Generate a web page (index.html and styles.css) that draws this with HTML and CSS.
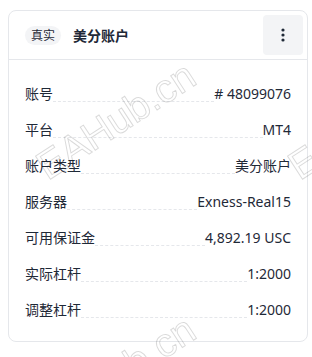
FILE: index.html
```html
<!DOCTYPE html>
<html lang="zh-CN">
<head>
    <meta charset="UTF-8">
    <meta name="viewport" content="width=device-width, initial-scale=1.0">
    <title>美分账户</title>
    <link rel="stylesheet" href="styles.css">
</head>
<body>

    <div class="card">
        <div class="card-header">
            <span class="tag">真实</span>
            <span class="title">美分账户</span>
            <button class="menu-btn" aria-label="更多">
                <svg width="4" height="14" viewBox="0 0 4 14">
                    <circle cx="2" cy="2" r="1.6" fill="#1f2937"/>
                    <circle cx="2" cy="7" r="1.6" fill="#1f2937"/>
                    <circle cx="2" cy="12" r="1.6" fill="#1f2937"/>
                </svg>
            </button>
        </div>

        <div class="card-body">
            <div class="row"><span class="label">账号</span><span class="fill"></span><span class="value"># 48099076</span></div>
            <div class="row"><span class="label">平台</span><span class="fill"></span><span class="value">MT4</span></div>
            <div class="row"><span class="label">账户类型</span><span class="fill"></span><span class="value">美分账户</span></div>
            <div class="row"><span class="label">服务器</span><span class="fill"></span><span class="value">Exness-Real15</span></div>
            <div class="row"><span class="label">可用保证金</span><span class="fill"></span><span class="value">4,892.19 USC</span></div>
            <div class="row"><span class="label">实际杠杆</span><span class="fill"></span><span class="value">1:2000</span></div>
            <div class="row"><span class="label">调整杠杆</span><span class="fill"></span><span class="value">1:2000</span></div>
        </div>
    </div>

    <div class="watermarks">
        <div class="watermark wm-1">EAHub.cn</div>
        <div class="watermark wm-2">EAHub.cn</div>
        <div class="watermark wm-3">EAHub.cn</div>
    </div>

</body>
</html>
```

FILE: styles.css
```css
html, body { overflow: hidden; }
body { margin: 0; padding: 10px 0 0 8px; background: #fff; font-family: "Noto Sans", "Noto Sans CJK SC", sans-serif; color: #1f2937; }
.card { width: 300px; box-sizing: border-box; border: 1px solid #e5e7eb; border-radius: 8px; background: #fff; }
.card-header { display: flex; align-items: center; height: 48px; padding: 0 4px 0 16px; border-bottom: 1px solid #e5e7eb; }
.tag { font-size: 12px; line-height: 19px; padding: 0 6px; background: #f3f4f6; border-radius: 10px; color: #1f2937; }
.title { margin-left: 12px; font-size: 14px; font-weight: 600; flex: 1; }
.menu-btn { width: 40px; height: 40px; border: none; border-radius: 4px; background: #f3f4f6; display: flex; align-items: center; justify-content: center; padding: 0; }
.card-body { padding: 16px 16px 13px; }
.row { display: flex; align-items: flex-end; height: 36px; font-size: 14px; line-height: 36px; }
.label, .value { white-space: nowrap; }
.fill { flex: 1; border-bottom: 1px dashed #e5e7eb; margin-bottom: 10px; }
.watermarks { position: fixed; left: 0; top: 0; width: 312px; height: 357px; overflow: hidden; pointer-events: none; }
.watermark { position: absolute; width: max-content; font-family: "Liberation Sans", sans-serif; font-size: 40px; color: transparent; -webkit-text-stroke: 1px rgba(0, 0, 0, 0.15); transform-origin: 0 100%; transform: rotate(-33deg); white-space: nowrap; line-height: 1; }
.wm-1 { left: 51px; top: 146px; }
.wm-2 { left: 303px; top: 146px; }
.wm-3 { left: 51px; top: 400px; }
```
